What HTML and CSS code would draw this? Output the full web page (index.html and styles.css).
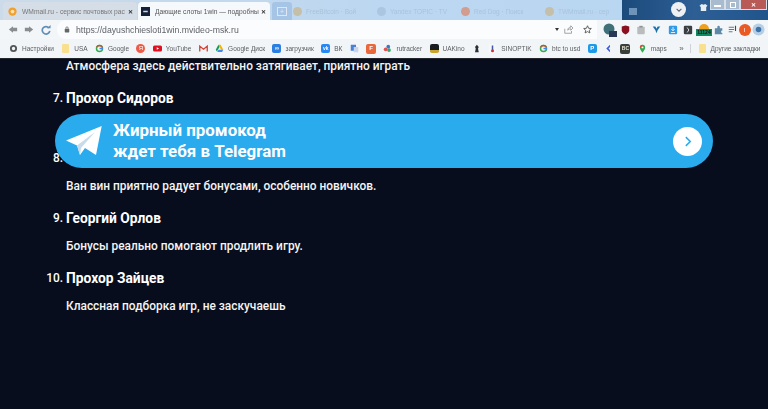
FILE: index.html
```html
<!DOCTYPE html>
<html lang="ru">
<head>
<meta charset="utf-8">
<title>Дающие слоты 1win</title>
<link rel="stylesheet" href="styles.css">
</head>
<body>
<header class="browser">
  <div class="tabstrip">
    <div class="tab tab-inactive">
      <svg class="tab-icon" viewBox="0 0 12 12"><circle cx="6" cy="6" r="5.500" fill="#f0a030"/><circle cx="6" cy="6" r="2.500" fill="#fbe0a8"/></svg>
      <span class="tab-title">WMmail.ru - сервис почтовых рас</span>
      <span class="tab-close">✕</span>
    </div>
    <div class="tab tab-active">
      <svg class="tab-icon" viewBox="0 0 12 12"><rect x="0" y="0" width="12" height="12" fill="#14203a"/><rect x="3" y="5" width="6" height="2" fill="#cfd6e0"/></svg>
      <span class="tab-title">Дающие слоты 1win — подробны</span>
      <span class="tab-close">✕</span>
    </div>
    <div class="tab-new"><span class="tab-new-box">+</span></div>
    <div class="ghost-tabs">
      <span class="ghost-tab"><i class="ghost-dot dot-tan"></i>FreeBitcoin · Вой</span>
      <span class="ghost-tab"><i class="ghost-dot dot-pale"></i>Yandex TOPIC · TV</span>
      <span class="ghost-tab"><i class="ghost-dot dot-red"></i>Red Dog · Поиск</span>
      <span class="ghost-tab"><i class="ghost-dot dot-tan"></i>TWMmail.ru - сер</span>
    </div>
    <div class="desktop">
      <span class="desk-tile"></span>
      <span class="desk-circle">
        <svg viewBox="0 0 10 10" class="desk-chev"><path d="M2 3.500 5 6.500 8 3.500" fill="none" stroke="#667" stroke-width="1.400"/></svg>
      </span>
      <svg class="desk-shirt" viewBox="0 0 10 10"><path d="M3 1 0.500 3 2 4.500V9H8V4.500L9.500 3 7 1 5 2Z" fill="#e8edf2"/></svg>
      <div class="winbtns">
        <span class="winbtn"><i class="win-min"></i></span>
        <span class="winbtn"><i class="win-max"></i></span>
        <span class="winbtn winbtn-close">✕</span>
      </div>
    </div>
  </div>

  <div class="toolbar">
    <svg class="nav-ico" viewBox="0 0 12 10"><path d="M6 1 1 5l5 4V7h5V3H6Z" fill="#8a8d90"/></svg>
    <svg class="nav-ico" viewBox="0 0 12 10"><path d="M6 1l5 4-5 4V7H1V3h5Z" fill="#8a8d90"/></svg>
    <svg class="nav-ico nav-reload" viewBox="0 0 12 12"><path d="M9.500 3.500A4.500 4.500 0 1 0 10.500 7" fill="none" stroke="#5f8db5" stroke-width="2"/><path d="M7 4h4.500V0Z" fill="#5f8db5"/></svg>
    <div class="omnibox">
      <svg class="lock" viewBox="0 0 8 10"><rect x="1" y="4" width="6" height="5" rx="1" fill="#666"/><path d="M2.500 4V3a1.500 1.500 0 0 1 3 0v1" fill="none" stroke="#666"/></svg>
      <span class="url">https://dayushchiesloti1win.mvideo-msk.ru</span>
      <span class="omni-end">
        <span class="caret"></span>
        <svg class="omni-ico" viewBox="0 0 12 12"><path d="M1 5v6h9V8M5 7c0-3 2-4 4-4V1l3 3-3 3V5C7 5 6 6 5 7Z" fill="none" stroke="#888"/></svg>
        <svg class="omni-ico star" viewBox="0 0 12 12"><path d="M6 1l1.500 3.400 3.600.3-2.700 2.400.8 3.500L6 8.800 2.800 10.600l.8-3.500L.9 4.700l3.600-.3Z" fill="none" stroke="#555" stroke-width="1.200"/></svg>
      </span>
    </div>
    <div class="ext-row">
      <span class="ext ext-globe"><svg viewBox="0 0 14 14"><circle cx="6" cy="6" r="5.500" fill="#3f6f78"/><rect x="6" y="8" width="8" height="6" fill="#273a55"/></svg></span>
      <span class="ext ext-small"><svg viewBox="0 0 12 13"><path d="M1 2l5-1.500L11 2v5c0 3-3 4.500-5 5.500C4 11.500 1 10 1 7Z" fill="#8a1020"/></svg></span>
      <span class="ext"><svg viewBox="0 0 12 12"><rect x="1.500" y="2" width="9" height="9" rx="1" fill="#b9bcbc"/><rect x="4" y="1" width="4" height="2" fill="#8f9292"/></svg></span>
      <span class="ext ext-small"><svg viewBox="0 0 12 12"><path d="M1 2h3.500L6 5l1.500-3H11L7.500 7 6 11 4.500 7Z" fill="#1e6fa8"/></svg></span>
      <span class="ext"><svg viewBox="0 0 12 12"><rect x="1" y="1" width="10" height="10" rx="1.500" fill="#2f9be8"/><path d="M6 2.500v4M4 5l2 2 2-2M3.500 9h5" fill="none" stroke="#fff"/></svg></span>
      <span class="ext"><svg viewBox="0 0 12 12"><rect x="1" y="1" width="10" height="10" rx="1.500" fill="#3a3f42"/><path d="M5 3 7 6 5 9" fill="none" stroke="#eee"/></svg></span>
      <span class="ext ext-wide"><svg viewBox="0 0 16 6"><path d="M3 6a5 5 0 0 1 10 0Z" fill="#f0a020"/></svg><b class="ext-badge">11124</b></span>
      <span class="ext"><svg viewBox="0 0 12 12"><path d="M1 4h3V2.500a1.500 1.500 0 0 1 3 0V4h3v2.500a1.500 1.500 0 0 0 0 3V11H1Z" fill="#5f89a8"/></svg></span>
      <span class="ext ext-small"><svg viewBox="0 0 12 12"><path d="M1 3h7M1 6h7M1 9h5" stroke="#666" stroke-width="1.200"/><path d="M10 1v7" stroke="#444" stroke-width="1.500"/></svg></span>
      <span class="avatar">I</span>
      <span class="ext ext-last"><svg viewBox="0 0 14 14"><circle cx="7" cy="7" r="6.500" fill="#b7cfe4"/><circle cx="7" cy="7" r="3" fill="#3d73a8"/></svg></span>
    </div>
  </div>

  <nav class="bookmarks">
    <span class="bm"><svg class="bm-ico" viewBox="0 0 12 12"><circle cx="6" cy="6" r="3.500" fill="none" stroke="#555" stroke-width="2.500"/></svg>Настройки</span>
    <span class="bm"><i class="folder"></i>USA</span>
    <span class="bm"><svg class="bm-ico" viewBox="0 0 12 12"><circle cx="6" cy="6" r="4" fill="none" stroke="#34a853" stroke-width="2"/><path d="M2.500 4A4 4 0 0 1 9.500 4" fill="none" stroke="#ea4335" stroke-width="2"/><path d="M6 6h4.500" stroke="#4285f4" stroke-width="2"/></svg>Google</span>
    <span class="bm"><span class="ya">Я</span></span>
    <span class="bm"><svg class="bm-ico" viewBox="0 0 12 12"><rect y="2" width="12" height="8" rx="2" fill="#e01020"/><path d="M5 4.200 8 6 5 7.800Z" fill="#fff"/></svg>YouTube</span>
    <span class="bm"><svg class="bm-ico" viewBox="0 0 12 12"><path d="M1 10V3l5 4 5-4v7" fill="none" stroke="#d44638" stroke-width="1.800"/></svg></span>
    <span class="bm"><svg class="bm-ico" viewBox="0 0 12 12"><path d="M4.500 1h3L11 7.500H8Z" fill="#f4b400"/><path d="M4.500 1 1 7.500 2.500 10 6 4Z" fill="#0f9d58"/><path d="M3 10.500h6.500L11 7.500H4.500Z" fill="#4285f4"/></svg>Google Диск</span>
    <span class="bm"><span class="tile tile-blue">∞</span>загрузчик</span>
    <span class="bm"><span class="tile tile-vk">vk</span>ВК</span>
    <span class="bm"><svg class="bm-ico" viewBox="0 0 12 12"><rect x="1" y="1" width="7" height="8" fill="#4a7fd8"/><rect x="5" y="4" width="6" height="7" fill="#c8d4e8"/></svg></span>
    <span class="bm"><span class="tile tile-f">F</span></span>
    <span class="bm"><svg class="bm-ico" viewBox="0 0 12 12"><circle cx="3.500" cy="7" r="2.500" fill="#e25050"/><circle cx="8" cy="8" r="2.500" fill="#35a860"/><circle cx="7" cy="3.500" r="2.500" fill="#3f74c8"/></svg>rutracker</span>
    <span class="bm"><span class="tile tile-ua"></span>UAKino</span>
    <span class="bm"><svg class="bm-ico" viewBox="0 0 12 12"><path d="M4 11h5L8 6l1-2-2.500-3L4 4l1 2Z" fill="#2a3038"/></svg></span>
    <span class="bm"><svg class="bm-ico" viewBox="0 0 12 12"><rect x="1" y="0" width="10" height="12" fill="#f6f7f8"/><rect x="5" y="2" width="2" height="6" fill="#3d5aa8"/><circle cx="6" cy="9" r="2" fill="#d03030"/></svg>SINOPTIK</span>
    <span class="bm"><svg class="bm-ico" viewBox="0 0 12 12"><circle cx="6" cy="6" r="4" fill="none" stroke="#34a853" stroke-width="2"/><path d="M2.500 4A4 4 0 0 1 9.500 4" fill="none" stroke="#ea4335" stroke-width="2"/><path d="M6 6h4.500" stroke="#4285f4" stroke-width="2"/></svg>btc to usd</span>
    <span class="bm"><span class="tile tile-p">P</span></span>
    <span class="bm"><svg class="bm-ico" viewBox="0 0 12 12"><path d="M8 1 3 6l5 5V8L6 6l2-2Z" fill="#3b5bdb"/></svg></span>
    <span class="bm"><span class="tile tile-bc">BC</span></span>
    <span class="bm"><svg class="bm-ico" viewBox="0 0 12 12"><path d="M6 11.500C4 8.500 2.500 7 2.500 4.500a3.500 3.500 0 0 1 7 0C9.500 7 8 8.500 6 11.500Z" fill="#34a853"/><path d="M2.500 4.500a3.500 3.500 0 0 1 3.500-3.500V4Z" fill="#ea4335"/><circle cx="6" cy="4.500" r="1.300" fill="#fff"/></svg>maps</span>
    <span class="bm-more">»</span>
    <span class="bm bm-other"><i class="folder"></i>Другие закладки</span>
  </nav>
</header>

<main class="page">
  <p class="review-text">Атмосфера здесь действительно затягивает, приятно играть</p>
  <ol class="reviews" start="7">
    <li class="review"><h3 class="review-name">Прохор Сидоров</h3><p class="review-text">Мне нравится, что тут много разных игр</p></li>
    <li class="review"><h3 class="review-name">Иван Кузнецов</h3><p class="review-text">Ван вин приятно радует бонусами, особенно новичков.</p></li>
    <li class="review"><h3 class="review-name">Георгий Орлов</h3><p class="review-text">Бонусы реально помогают продлить игру.</p></li>
    <li class="review"><h3 class="review-name">Прохор Зайцев</h3><p class="review-text">Классная подборка игр, не заскучаешь</p></li>
  </ol>
  <aside class="promo">
    <svg class="promo-plane" viewBox="0 0 36 31"><path d="M0 14.500 35.700 0 30 29 19 22 14 29 11 19.500Z" fill="#fff"/><path d="M11 19.500 29 6 15 22 14 29Z" fill="#c8dbe9"/></svg>
    <div class="promo-text">Жирный промокод<br>ждет тебя в Telegram</div>
    <span class="promo-btn"><svg viewBox="0 0 10 10" class="promo-chev"><path d="M3.500 1 7.500 5 3.500 9" fill="none" stroke="#2aabee" stroke-width="1.400"/></svg></span>
  </aside>
</main>
</body>
</html>
```
FILE: styles.css
```css
* { box-sizing: border-box; }
html, body { margin: 0; height: 100%; }
body {
  width: 768px;
  height: 409px;
  overflow: hidden;
  background: #080d1e;
  font-family: "Roboto", "Liberation Sans", sans-serif;
  display: flex;
  flex-direction: column;
}
i { display: block; }

/* Browser chrome */
.browser {
  height: 59px;
  flex: none;
  background: #f2f5f8;
  border-bottom: 1px solid #23262c;
  font-family: "Liberation Sans", "Noto Sans", sans-serif;
  filter: blur(0.5px);
  overflow: hidden;
}
.tabstrip {
  height: 20px;
  display: flex;
  align-items: flex-end;
  padding-left: 3px;
  background: linear-gradient(90deg, #ccdbea 0, #bcd7f1 50%, #b7d5f2 100%);
}
.tab {
  height: 18px;
  flex: none;
  display: flex;
  align-items: center;
  gap: 5px;
  font-size: 6.700px;
  border-radius: 4px 4px 0 0;
}
.tab-inactive { width: 134px; padding: 0 4px 0 5px; background: #d5dde6; color: #777; margin-right: 1px; }
.tab-active { width: 132px; padding: 0 4px 0 3px; background: #f6f9fb; color: #555; }
.tab-icon { width: 9px; height: 9px; flex: none; }
.tab-title { flex: 1; min-width: 0; white-space: nowrap; }
.tab-close { flex: none; font-size: 6px; color: #333; font-weight: 700; }
.tab-new { width: 20px; flex: none; height: 18px; display: flex; align-items: center; justify-content: center; background: #a6c5e6; margin-left: 2px; border-radius: 3px 3px 0 0; }
.tab-new-box { width: 10px; height: 9px; border: 1px solid #dfe8f2; color: #dfe8f2; font-size: 7px; line-height: 7px; text-align: center; }
.ghost-tabs { flex: 1; display: flex; height: 18px; align-items: center; padding-left: 1px; font-size: 6.500px; color: #a9c3dd; white-space: nowrap; min-width: 0; }
.ghost-tab { display: flex; align-items: center; gap: 4px; width: 84px; flex: none; }
.ghost-dot { width: 9px; height: 9px; border-radius: 50%; flex: none; }
.dot-tan { background: #c4bfa8; }
.dot-red { background: #d29c8e; }
.dot-pale { background: #aac6e0; }
.desktop {
  width: 146px;
  flex: none;
  height: 20px;
  align-self: flex-start;
  display: flex;
  align-items: flex-start;
  background: linear-gradient(90deg, #1c4a7c, #2d5f95 50%, #20558c);
}
.desk-tile { width: 8px; height: 7px; background: #6e93b8; margin: 8px 0 0 7px; flex: none; }
.desk-circle { width: 15px; height: 15px; background: #eef1f4; border-radius: 50%; margin: 2px 0 0 34px; display: flex; align-items: center; justify-content: center; flex: none; }
.desk-chev { width: 8px; height: 8px; }
.desk-shirt { width: 9px; height: 9px; margin: 3px 0 0 13px; flex: none; }
.winbtns { display: flex; margin-left: 2px; height: 10px; flex: none; }
.winbtn { width: 15px; height: 10px; display: flex; align-items: center; justify-content: center; background: #a9bccf; border: 1px solid #d6e0ea; border-top: 0; font-size: 6px; color: #fff; }
.winbtn-close { width: 27px; background: #b85a55; font-weight: 700; }
.win-min { width: 7px; height: 2px; background: #fff; margin-top: 2px; }
.win-max { width: 6px; height: 6px; border: 1.500px solid #fff; }

.toolbar {
  height: 19px;
  display: flex;
  align-items: center;
  padding-left: 8px;
  background: #f2f6f9;
}
.nav-ico { width: 10px; height: 9px; margin-right: 6px; flex: none; }
.nav-reload { width: 10px; height: 10px; margin: 0 6px 0 1px; }
.omnibox {
  width: 540px;
  height: 19px;
  background: #fbfcfd;
  border-radius: 9px 0 0 9px;
  display: flex;
  align-items: center;
  padding-left: 7px;
  flex: none;
}
.lock { width: 6px; height: 9px; margin-right: 6px; flex: none; }
.url { font-size: 8.700px; color: #5f6368; white-space: nowrap; flex: 1; }
.omni-end { display: flex; align-items: center; padding-right: 5px; }
.caret { width: 0; height: 0; border: 2px solid transparent; border-top: 3px solid #333; border-bottom: 0; margin-right: 5px; }
.omni-ico { width: 9px; height: 9px; }
.star { margin-left: 10px; }
.ext-row {
  flex: 1;
  display: grid;
  grid-template-columns: 14.500px 15.500px 16px 15.500px 16px 15.500px 16px 14px 12px 13px 15px;
  align-items: center;
  justify-items: center;
  padding-left: 6px;
}
.ext { width: 10px; height: 10px; display: block; }
.ext svg { display: block; width: 100%; }
.ext-small { width: 9px; height: 9px; }
.ext-globe { width: 14px; height: 14px; }
.ext-wide { width: 16px; height: 14px; }
.ext-badge { display: block; background: #0f8a5f; color: #111; font-size: 5px; font-weight: 700; line-height: 7px; text-align: center; }
.avatar { width: 12px; height: 12px; border-radius: 50%; background: #ea5a22; color: #fff; font-size: 6px; display: flex; align-items: center; justify-content: center; }
.ext-last { width: 13px; height: 13px; }

.bookmarks {
  height: 19px;
  display: flex;
  align-items: center;
  padding-left: 9px;
  background: #f2f5f8;
  font-size: 6.500px;
  color: #5a5d60;
  white-space: nowrap;
}
.bm { display: flex; align-items: center; gap: 4px; margin-right: 7.400px; flex: none; }
.bm-ico { width: 9px; height: 9px; flex: none; }
.folder { width: 7px; height: 9px; background: #f8e08e; border-radius: 1px; margin: 0 1px; }
.ya { width: 9px; height: 9px; border-radius: 50%; background: #ee5a47; color: #fff; font-size: 6px; text-align: center; line-height: 9px; }
.tile { width: 9px; height: 9px; border-radius: 2px; color: #fff; font-size: 6px; line-height: 9px; text-align: center; font-weight: 700; flex: none; }
.tile-blue { background: #2a7fe0; }
.tile-vk { background: #2787f5; font-size: 5px; }
.tile-f { background: #e8683c; width: 10px; height: 10px; }
.tile-ua { background: #1b1d22; border-bottom: 3px solid #c8a52e; }
.tile-p { background: #1e9be8; }
.tile-bc { background: #3a3f3a; color: #e6e6d8; font-size: 5px; width: 10px; height: 10px; }
.bm-more { margin: 0 6px 0 5px; font-size: 8px; flex: none; }
.bm-other { border-left: 1px solid #cfd3d7; padding-left: 7px; margin-right: 0; }

/* Page */
.page {
  flex: 1;
  position: relative;
  color: #fff;
  padding: 0 0 0 66px;
}
.review-text {
  margin: 0;
  font-size: 11.900px;
  font-weight: 500;
  line-height: 14px;
  color: #f4f4f4;
}
.reviews { margin: 0; padding: 0; list-style: none; counter-reset: n 6; }
.review { counter-increment: n; margin-top: 16px; position: relative; }
.review::before {
  content: counter(n) ".";
  position: absolute;
  right: 100%;
  margin-right: 3px;
  top: 2px;
  font-size: 11.900px;
  font-weight: 500;
  line-height: 14px;
}
.review-name { margin: 0 0 12px; font-size: 13.800px; font-weight: 700; line-height: 18px; color: #fff; }
.promo {
  position: absolute;
  left: 55px;
  top: 55px;
  width: 658px;
  height: 54px;
  border-radius: 27px;
  background: #2aabee;
  display: flex;
  align-items: center;
  padding: 0 11px 0 11px;
}
.promo-plane { width: 36px; height: 31px; flex: none; }
.promo-text { flex: 1; margin-left: 11px; font-size: 16.900px; font-weight: 700; line-height: 21px; color: #fff; }
.promo-btn { width: 29px; height: 29px; border-radius: 50%; background: #fff; display: flex; align-items: center; justify-content: center; }
.promo-chev { width: 11px; height: 11px; }
```
